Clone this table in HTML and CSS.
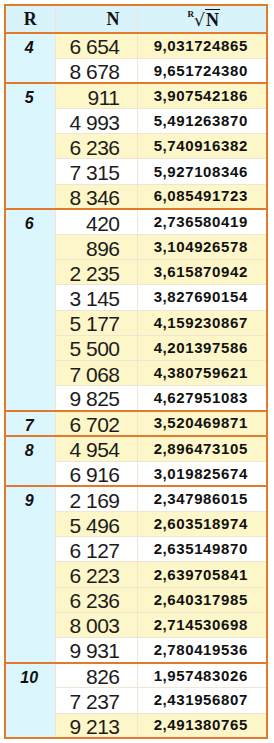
FILE: index.html
```html
<!DOCTYPE html>
<html lang="es">
<head>
    <meta charset="UTF-8">
    <meta name="viewport" content="width=device-width, initial-scale=1.0">
    <title>Raíces</title>
    <link rel="stylesheet" href="styles.css">
</head>
<body>
    <table class="roots">
        <colgroup>
            <col class="col-r">
            <col class="col-n">
            <col class="col-root">
        </colgroup>
        <thead>
            <tr>
                <th class="h-r">R</th>
                <th class="h-n">N</th>
                <th class="h-root"><span class="idx">R</span><span class="rad">√</span><span class="over">N</span></th>
            </tr>
        </thead>
        <tbody>
            <tr class="y"><td class="r" rowspan="2">4</td><td class="n">6&nbsp;654</td><td class="v">9,031724865</td></tr>
            <tr class="w"><td class="n">8&nbsp;678</td><td class="v">9,651724380</td></tr>
        </tbody>
        <tbody>
            <tr class="y"><td class="r" rowspan="5">5</td><td class="n">911</td><td class="v">3,907542186</td></tr>
            <tr class="w"><td class="n">4&nbsp;993</td><td class="v">5,491263870</td></tr>
            <tr class="y"><td class="n">6&nbsp;236</td><td class="v">5,740916382</td></tr>
            <tr class="w"><td class="n">7&nbsp;315</td><td class="v">5,927108346</td></tr>
            <tr class="y"><td class="n">8&nbsp;346</td><td class="v">6,085491723</td></tr>
        </tbody>
        <tbody>
            <tr class="w"><td class="r" rowspan="8">6</td><td class="n">420</td><td class="v">2,736580419</td></tr>
            <tr class="y"><td class="n">896</td><td class="v">3,104926578</td></tr>
            <tr class="y"><td class="n">2&nbsp;235</td><td class="v">3,615870942</td></tr>
            <tr class="w"><td class="n">3&nbsp;145</td><td class="v">3,827690154</td></tr>
            <tr class="y"><td class="n">5&nbsp;177</td><td class="v">4,159230867</td></tr>
            <tr class="y"><td class="n">5&nbsp;500</td><td class="v">4,201397586</td></tr>
            <tr class="y"><td class="n">7&nbsp;068</td><td class="v">4,380759621</td></tr>
            <tr class="w"><td class="n">9&nbsp;825</td><td class="v">4,627951083</td></tr>
        </tbody>
        <tbody>
            <tr class="y"><td class="r">7</td><td class="n">6&nbsp;702</td><td class="v">3,520469871</td></tr>
        </tbody>
        <tbody>
            <tr class="y"><td class="r" rowspan="2">8</td><td class="n">4&nbsp;954</td><td class="v">2,896473105</td></tr>
            <tr class="w"><td class="n">6&nbsp;916</td><td class="v">3,019825674</td></tr>
        </tbody>
        <tbody>
            <tr class="w"><td class="r" rowspan="7">9</td><td class="n">2&nbsp;169</td><td class="v">2,347986015</td></tr>
            <tr class="y"><td class="n">5&nbsp;496</td><td class="v">2,603518974</td></tr>
            <tr class="w"><td class="n">6&nbsp;127</td><td class="v">2,635149870</td></tr>
            <tr class="y"><td class="n">6&nbsp;223</td><td class="v">2,639705841</td></tr>
            <tr class="y"><td class="n">6&nbsp;236</td><td class="v">2,640317985</td></tr>
            <tr class="y"><td class="n">8&nbsp;003</td><td class="v">2,714530698</td></tr>
            <tr class="w"><td class="n">9&nbsp;931</td><td class="v">2,780419536</td></tr>
        </tbody>
        <tbody>
            <tr class="w"><td class="r" rowspan="3">10</td><td class="n">826</td><td class="v">1,957483026</td></tr>
            <tr class="w"><td class="n">7&nbsp;237</td><td class="v">2,431956807</td></tr>
            <tr class="y"><td class="n">9&nbsp;213</td><td class="v">2,491380765</td></tr>
        </tbody>
    </table>
</body>
</html>
```

FILE: styles.css
```css
body {
    margin: 4px 0 0 4px;
    background: #fff;
    font-family: "Liberation Sans", Arial, sans-serif;
    color: #1c1c1c;
}
.roots {
    border-collapse: collapse;
    table-layout: fixed;
    width: 262px;
    border: 2px solid #e27a2c;
}
.col-r { width: 50px; }
.col-n { width: 82px; }
.col-root { width: 130px; }

thead th {
    height: 26px;
    padding: 0;
    background-color: #d9f3fb;
    border-bottom: 2px solid #e27a2c;
    border-left: 1px solid #f0e4d2;
    font-family: "Liberation Serif", "Times New Roman", serif;
    font-weight: bold;
    font-size: 18px;
    line-height: 1;
    color: #111;
}
.h-r { text-align: center; }
.h-n { text-align: right; padding-right: 17px; }
.h-root { text-align: center; padding-left: 4px; }
.idx {
    font-size: 9px;
    vertical-align: 9px;
    margin-right: 0;
}
.rad {
    font-family: "DejaVu Serif", serif;
    font-weight: normal;
    font-size: 17px;
}
.over {
    border-top: 1.5px solid #111;
    padding: 0 1px;
}

tbody {
    border-top: 2px solid #e27a2c;
}
td {
    box-sizing: border-box;
    height: 25.2px;
    padding: 0;
    border-top: 1px solid #ede6d3;
    border-left: 1px solid #f0e4d2;
}
tr.y td { background-color: #fdf6c8; }
tr.w td { background-color: #fff; }
tr td.r {
    background-color: #dcf6fd;
    vertical-align: top;
    text-align: center;
    padding-top: 5px;
    padding-right: 2px;
    font-style: italic;
    font-weight: bold;
    font-size: 16px;
    line-height: 18px;
    color: #111;
}
.n {
    text-align: right;
    padding-right: 17px;
    padding-top: 3px;
    font-size: 21px;
    letter-spacing: -0.5px;
    line-height: 20px;
}
.v {
    text-align: center;
    font-weight: bold;
    font-size: 15px;
    letter-spacing: 0.6px;
    line-height: 16px;
    padding-right: 2px;
    color: #111;
}
```
